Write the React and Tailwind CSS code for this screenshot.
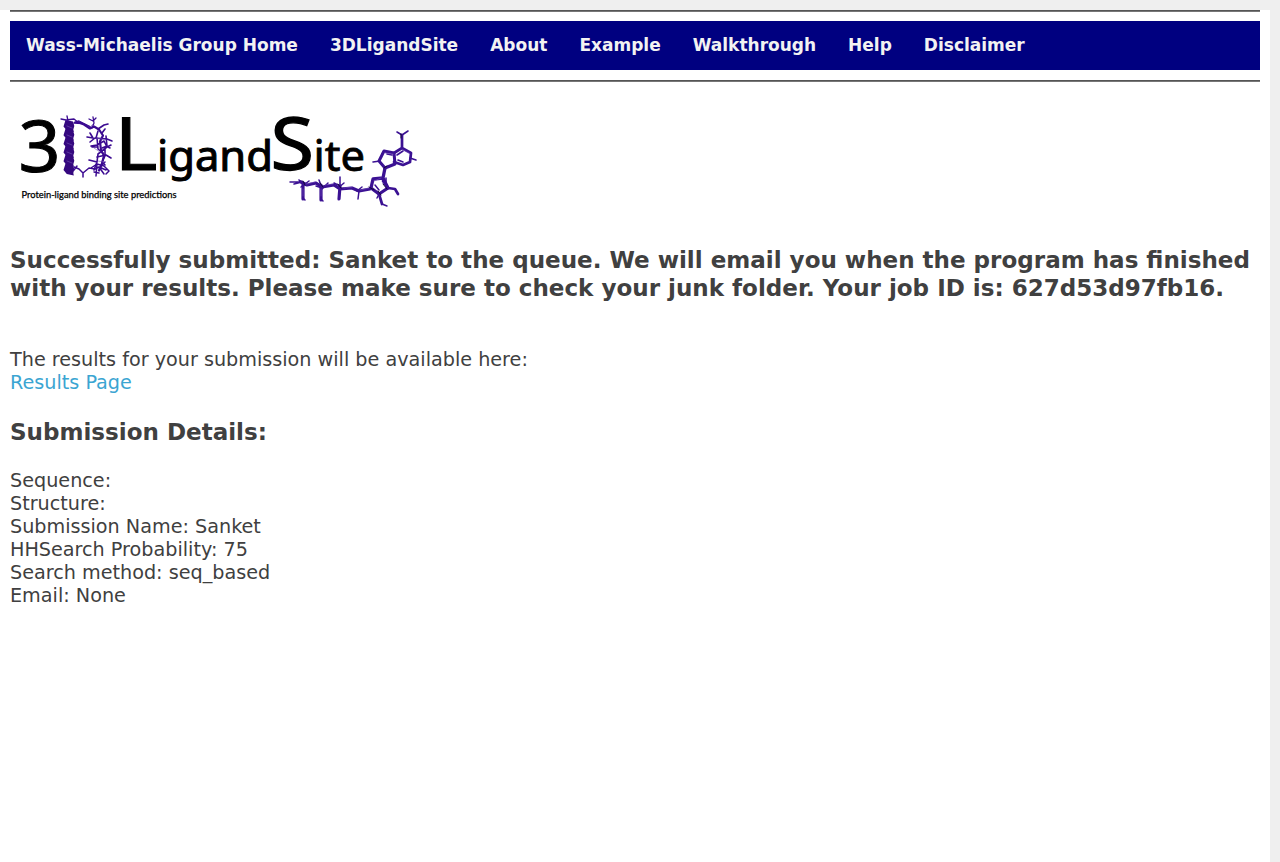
const links = ['Wass-Michaelis Group Home', '3DLigandSite', 'About', 'Example', 'Walkthrough', 'Help', 'Disclaimer'];

const details = [
  'Sequence:',
  'Structure:',
  'Submission Name: Sanket',
  'HHSearch Probability: 75',
  'Search method: seq_based',
  'Email: None',
];

const Rule = () => <hr className="h-0.5 border-t border-b border-t-[#555] border-b-[#777]" />;

const helix = [0, 1, 2, 3, 4, 5];

function Logo() {
  return (
    <svg className="block h-[110px] w-[420px] overflow-visible font-['Noto_Sans',sans-serif]" viewBox="10 105 420 110" role="img" aria-label="3DLigandSite">
      <g fill="#000" stroke="#000">
        <text x="18.500" y="172" fontSize="72" textLength="42" lengthAdjust="spacingAndGlyphs" strokeWidth="1">3</text>
        <text x="114.500" y="170.300" fontSize="73" textLength="43" lengthAdjust="spacingAndGlyphs" strokeWidth="1">L</text>
        <text x="157" y="170.500" fontSize="42.500" textLength="116" lengthAdjust="spacingAndGlyphs" strokeWidth="1">igand</text>
        <text x="270.500" y="170" fontSize="73" textLength="43.500" lengthAdjust="spacingAndGlyphs" strokeWidth="1.300">S</text>
        <text x="313.500" y="170.500" fontSize="42.500" textLength="51.500" lengthAdjust="spacingAndGlyphs" strokeWidth="0.800">ite</text>
        <text className="font-['Lato',sans-serif]" x="21.500" y="197.800" fontSize="8.600" textLength="155" lengthAdjust="spacingAndGlyphs" strokeWidth="0.250">Protein-ligand binding site predictions</text>
      </g>
      <g fill="none" stroke="#3b0a91" strokeLinecap="round" strokeLinejoin="round">
        <g stroke="none" fill="#35087f">
          {helix.map((i) => (
            <path key={i} transform={`translate(0 ${i * 8.7})`} d="M65.500 120l7.500 1.500 1.300 4.500-1 3.500.5 2.500-7-1.500-3.300-4z" />
          ))}
        </g>
        <path strokeWidth="1.300" d="M61 119l5 1 8-1 5 4M67 116l1 5M75 122l4-1 6 3 4 2 3 2 2-5 -1-6M89 119l4 2 3-3M74 123l8 .5" />
        <path strokeWidth="2.200" d="M79 122.500l5 2 6 4 4-2 5 3 4 6-3 6 1 9 3 5-2 8-3 7" />
        <path strokeWidth="1.600" d="M98 129l6-4 4-1M102 133l3-4M87 137l6 1-3-5M90 142l5-4 12 1 5 2M91 146l6-1 7-4 3 6 4-2M98 131l-2 7M97 138l1 11 5 4M106 136l1 10-5 2M98 147l-6 0M97 157l9-2 5 3M105 148v8l-3 6 3 3M89 160l8 2 1-8 9-7M106 146l4 2M97 162l-3 8" />
        <path strokeWidth="1.500" d="M74 167l5 2 4 4 6-5 6 1 4-2 7 3M83 173v4M77 166l-3 4M91 168l6-4 7 2 5 5-3 3M97 164l-1 12M99 167l5 7M101 166l4-4M94 172l5 1" />
        <g stroke="#3b1193">
          <path strokeWidth="3.200" d="M301 182l6 3 9-2 6 4 12-2 6 4 12-1 7 3 11-2M303 183v16M321 185v15M340 186l-1 13" />
          <path strokeWidth="1.500" d="M290 182l11 0M294 184l8-2-3-2M299 180l5 5M309 181l-8 6M319 180l3 8-6-2M322 200l1 1M304 199l1 1M340 177v9l-6-3M338 188l6-5M359 191l-1 8M322 189l6-6M357 191l5-4" />
          <path strokeWidth="3.300" d="M371 188l2-9 10-1 5 10-9 6-8-6M383 178l2-10" />
          <path strokeWidth="3" d="M385 168l-6-7 5-10 10 2 1 11-10 4" />
          <path strokeWidth="2.700" d="M394 153l8-5 9 5-1 9-7 3-9-3M402 148v-13" />
          <path strokeWidth="1.600" d="M402 135l-5-3M402 135l6-4M380 161l-7 1M410 158l6 2M397 155l6-4M387 154l5 1M398 160l5 2M384 151l-2 3" />
          <path strokeWidth="2.700" d="M388 188l7 1 3 5M388 188l-5-7M379 194l3 10" />
          <path strokeWidth="1.500" d="M382 204l5 2M375 185l4 5M386 184v-6M379 194l-2 4" />
          <g stroke="#120837" strokeWidth="1">
            <path d="M303 181l2 4M320 183l3 4M338 184l3 4M369 187l5 3M383 184l4 5M378 191l3 4M384 168l3-2M401 134v4" />
          </g>
          <path stroke="#7550bd" strokeWidth=".6" d="M306 184l9-2M325 185l8-1M344 188l8-1M361 190l8-2M374 181l7-3M385 153l8 1M403 150l6 3M303 189v7M321 189v7" />
        </g>
        <path stroke="#7655b5" strokeWidth=".6" d="M67 126l5 2M67 135l5 2M67 143l5 2M67 152l5 2M67 161l5 2M95 138l7 1M94 148l6 4M98 161l6 1M90 127l3-3" />
      </g>
    </svg>
  );
}

export default function App() {
  return (
    <div className="min-h-[862px] bg-[#efefef] pt-2.5 pr-2.5 font-['DejaVu_Sans',sans-serif] text-[#404040]">
      <div className="min-h-[852px] bg-white pr-2.5 pl-2.5">
        <Rule />
        <nav className="mt-[9px] mb-2.5 flex h-[49px] items-start bg-[#000080] pt-3.5 text-[17px] font-bold text-[#f2f2f2]">
          {links.map((l) => (
            <a key={l} href="#" className="px-4 leading-5">{l}</a>
          ))}
        </nav>
        <Rule />
        <header className="mt-[23px]"><Logo /></header>
        <main className="text-[19.2px] leading-[23px]">
          <h2 className="mt-[31px] text-[23.04px] leading-7 font-bold">
            Successfully submitted: Sanket to the queue. We will email you when the program has finished with your results. Please make sure to check your junk folder. Your job ID is: 627d53d97fb16.
          </h2>
          <p className="mt-[46px]">The results for your submission will be available here:</p>
          <a href="#" className="text-[#3ba5d2]">Results Page</a>
          <h2 className="mt-6 text-[23.04px] leading-7 font-bold">Submission Details:</h2>
          <div className="mt-[23px]">
            {details.map((d) => <p key={d}>{d}</p>)}
          </div>
        </main>
      </div>
    </div>
  );
}
